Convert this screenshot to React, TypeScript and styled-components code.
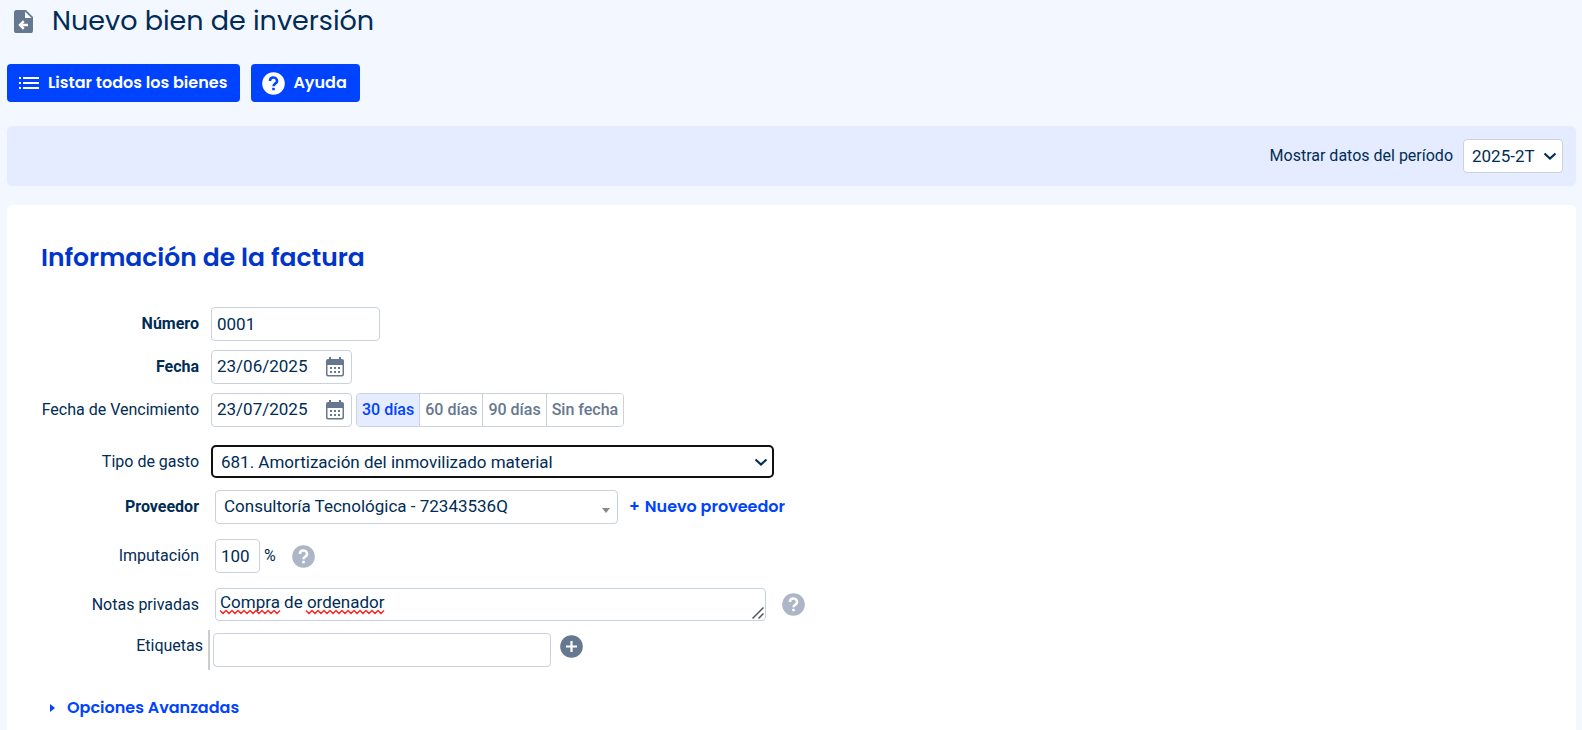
import React from "react";
import styled, { createGlobalStyle } from "styled-components";

const sans = `Roboto, "Liberation Sans", sans-serif`;
const display = `Poppins, Inter, "Liberation Sans", sans-serif`;

const color = {
  page: "#f3f7ff",
  band: "#e5ecff",
  ink: "#002c55",
  blue: "#0043ff",
  heading: "#0035cc",
  border: "#c9d2dd",
  slate: "#66788f",
  muted: "#adb6c6",
};

const GlobalStyle = createGlobalStyle`
  * { box-sizing: border-box; }
  body {
    margin: 0;
    background: ${color.page};
    color: ${color.ink};
    font: 16px/20px ${sans};
  }
  input, select, textarea, button { font: inherit; color: inherit; margin: 0; }
`;

const Page = styled.div`
  min-height: 100vh;
  display: flex;
  flex-direction: column;
  padding: 0 6px 0 7px;
`;

const Header = styled.header`
  display: flex;
  align-items: center;
  gap: 19px;
  height: 42px;
  padding-left: 7px;
`;

const Title = styled.h1`
  margin: 0;
  font: 400 27px/40px ${display};
`;

const Actions = styled.nav`
  display: flex;
  gap: 11px;
  margin-top: 22px;
`;

const ActionButton = styled.button`
  display: flex;
  align-items: center;
  gap: 8px;
  height: 38px;
  padding: 0 13px 0 11px;
  border: 0;
  border-radius: 4px;
  background: ${color.blue};
  color: #fff;
  font: 600 16px/24px ${display};
  cursor: pointer;
`;

const PeriodBar = styled.div`
  display: flex;
  align-items: center;
  justify-content: flex-end;
  gap: 10px;
  height: 60px;
  margin-top: 24px;
  padding-right: 13px;
  border-radius: 5px;
  background: ${color.band};
`;

const Card = styled.main`
  flex: 1;
  margin-top: 19px;
  padding: 35px 34px 8px;
  border-radius: 5px 5px 0 0;
  background: #fff;
`;

const SectionTitle = styled.h2`
  margin: 0 0 31px;
  font: 600 25px/36px ${display};
  color: ${color.heading};
`;

const Row = styled.div<{ $top?: number; $inset?: boolean }>`
  display: flex;
  align-items: center;
  gap: ${(p) => (p.$inset ? 16 : 12)}px;
  margin-top: ${(p) => p.$top ?? 9}px;
`;

const Label = styled.label<{ $bold?: boolean }>`
  width: 158px;
  flex: none;
  text-align: right;
  white-space: nowrap;
  font-weight: ${(p) => (p.$bold ? 700 : 400)};
`;

const Controls = styled.div<{ $gap?: number }>`
  display: flex;
  align-items: center;
  gap: ${(p) => p.$gap ?? 4}px;
`;

const TextInput = styled.input<{ $width: number }>`
  width: ${(p) => p.$width}px;
  height: 34px;
  padding: 0 5px;
  border: 1px solid ${color.border};
  border-radius: 4px;
  background: #fff;
  font-size: 17px;
  outline: 0;
`;

const DateBox = styled.div`
  display: flex;
  align-items: center;
  width: 141px;
  height: 34px;
  padding-right: 7px;
  border: 1px solid ${color.border};
  border-radius: 4px;
`;

const DateInput = styled.input`
  flex: 1;
  min-width: 0;
  height: 32px;
  padding: 0 5px 2px;
  border: 0;
  background: none;
  font-size: 17px;
  outline: 0;
`;

const IconButton = styled.button`
  display: flex;
  padding: 0;
  border: 0;
  background: none;
  color: ${color.slate};
  cursor: pointer;
`;

const Segments = styled.div`
  display: flex;
  height: 34px;
  border: 1px solid ${color.border};
  border-radius: 4px;
  overflow: hidden;
`;

const Segment = styled.button<{ $active?: boolean }>`
  padding: 0 5px;
  border: 0;
  background: ${(p) => (p.$active ? color.band : "#fff")};
  color: ${(p) => (p.$active ? color.blue : color.slate)};
  font-weight: 500;
  cursor: pointer;
  & + & { border-left: 1px solid ${color.border}; }
`;

const SelectWrap = styled.div`
  position: relative;
  display: flex;
  > svg {
    position: absolute;
    right: 6px;
    top: 13px;
    pointer-events: none;
  }
`;

const Select = styled.select<{ $width: number; $focused?: boolean; $raised?: boolean }>`
  appearance: none;
  width: ${(p) => p.$width}px;
  height: ${(p) => (p.$focused ? 33 : 34)}px;
  padding: 0 8px ${(p) => (p.$raised ? 3 : 0)}px;
  border: ${(p) => (p.$focused ? "2px solid #101010" : `1px solid ${color.border}`)};
  border-radius: ${(p) => (p.$focused ? 5 : 4)}px;
  background: #fff;
  font-size: 17px;
  outline: 0;
`;

const BlueLink = styled.a`
  display: inline-flex;
  align-items: center;
  gap: 5px;
  color: ${color.blue};
  font: 600 16px/24px ${display};
  text-decoration: none;
`;

const HelpButton = styled(IconButton)`
  margin-left: 12px;
  color: ${color.muted};
`;

const NotesWrap = styled.div`
  position: relative;
  display: flex;
`;

const Notes = styled.textarea`
  width: 551px;
  height: 33px;
  padding: 3px 4px;
  border: 1px solid ${color.border};
  border-radius: 4px;
  background: #fff;
  font-size: 17px;
  line-height: 20px;
  resize: none;
  overflow: hidden;
  outline: 0;
`;

const SpellSvg = styled.svg`
  position: absolute;
  left: 5px;
  top: 20px;
  pointer-events: none;
`;

const GripSvg = styled.svg`
  position: absolute;
  right: 2px;
  bottom: 2px;
  pointer-events: none;
`;

const TagRow = styled.div`
  display: flex;
  align-items: center;
  gap: 5px;
  margin-top: 9px;
  ${Label} {
    width: 162px;
    margin-bottom: 8px;
  }
`;

const TagBox = styled.div`
  display: flex;
  align-items: center;
  height: 40px;
  padding-left: 3px;
  border-left: 2px solid #ccc;
  gap: 9px;
  ${IconButton} { margin-bottom: 8px; }
`;

const Advanced = styled.div`
  display: flex;
  padding: 26px 0 0 9px;
  ${BlueLink} { gap: 12px; }
`;

const FileIcon = () => (
  <svg width="19" height="23" viewBox="0 0 19 23" aria-hidden="true">
    <path d="M2.6 0H12l7 7v13.400a2.600 2.600 0 0 1-2.600 2.600H2.600A2.600 2.600 0 0 1 0 20.400V2.600A2.600 2.600 0 0 1 2.600 0z" fill={color.slate} />
    <path d="M11 1.500l6.500 6.500H11z" fill="#fff" />
    <path d="M14 15H7M9.800 11.200L6 15l3.800 3.800" fill="none" stroke="#fff" strokeWidth="2.400" />
  </svg>
);

const ListIcon = () => (
  <svg width="22" height="14" viewBox="-1 0 22 14" fill="#fff" aria-hidden="true">
    <path d="M0 1h2v2H0zM0 6h2v2H0zM0 11h2v2H0zM4 1h16v2H4zM4 6h16v2H4zM4 11h16v2H4z" />
  </svg>
);

const HelpIcon = ({ mark }: { mark: string }) => (
  <svg width="23" height="23" viewBox="0 0 23 23" aria-hidden="true">
    <circle cx="11.500" cy="11.500" r="11.300" fill="currentColor" />
    <path d="M8 9a3.500 3.300 0 1 1 5.300 2.600c-1.200.8-1.800 1.300-1.800 2.700" fill="none" stroke={mark} strokeWidth="2.500" />
    <rect x="10.200" y="15.700" width="2.600" height="2.600" rx=".6" fill={mark} />
  </svg>
);

const CalendarIcon = () => (
  <svg width="18" height="20" viewBox="0 0 18 20" fill="currentColor" aria-hidden="true">
    <path fillRule="evenodd" d="M3 0h2v2h8V0h2v2h1a2 2 0 0 1 2 2v13.500a2 2 0 0 1-2 2H2a2 2 0 0 1-2-2V4a2 2 0 0 1 2-2h1zM1.500 8V17a1 1 0 0 0 1 1h13a1 1 0 0 0 1-1V8z" />
    <path d="M4 10h2v2H4zM8 10h2v2H8zM12 10h2v2h-2zM4 14h2v2H4zM8 14h2v2H8zM12 14h2v2h-2z" />
  </svg>
);

const PlusIcon = () => (
  <svg width="23" height="23" viewBox="0 0 23 23" aria-hidden="true">
    <circle cx="11.500" cy="11.500" r="11.300" fill="currentColor" />
    <path d="M11.500 6v11M6 11.500h11" stroke="#fff" strokeWidth="2.200" />
  </svg>
);

const Chevron = () => (
  <svg width="14" height="9" viewBox="0 0 14 9" aria-hidden="true">
    <path d="M1.500 1.500L7 6.500l5.500-5" fill="none" stroke={color.ink} strokeWidth="2.100" />
  </svg>
);

const Caret = () => (
  <svg width="12" height="14" viewBox="0 0 12 14" aria-hidden="true">
    <path d="M2 5h8l-4 5z" fill="#888" />
  </svg>
);

const wave = (from: number, to: number) => {
  let d = `M${from} 2.500`;
  for (let x = from; x < to; x += 6) d += "l3 3l3 -3";
  return d;
};

const SpellMarks = () => (
  <SpellSvg width="170" height="8" viewBox="0 0 170 8" aria-hidden="true">
    <path d={wave(0, 58) + wave(86, 160)} fill="none" stroke="#f22" strokeWidth="1.400" />
  </SpellSvg>
);

const Grip = () => (
  <GripSvg width="12" height="12" viewBox="0 0 12 12" aria-hidden="true">
    <path d="M.5 11.500l11-11M6.500 11.500l5-5" stroke="#555" strokeWidth="1.500" />
  </GripSvg>
);

const terms = ["30 días", "60 días", "90 días", "Sin fecha"];

export default function App() {
  return (
    <Page>
      <GlobalStyle />
      <Header>
        <FileIcon />
        <Title>Nuevo bien de inversión</Title>
      </Header>
      <Actions>
        <ActionButton type="button"><ListIcon />Listar todos los bienes</ActionButton>
        <ActionButton type="button"><HelpIcon mark={color.blue} />Ayuda</ActionButton>
      </Actions>
      <PeriodBar>
        <label htmlFor="periodo">Mostrar datos del período</label>
        <SelectWrap>
          <Select id="periodo" $width={100}><option>2025-2T</option></Select>
          <Chevron />
        </SelectWrap>
      </PeriodBar>
      <Card>
        <SectionTitle>Información de la factura</SectionTitle>
        <Row $top={0}>
          <Label htmlFor="numero" $bold>Número</Label>
          <TextInput id="numero" $width={169} defaultValue="0001" />
        </Row>
        <Row>
          <Label htmlFor="fecha" $bold>Fecha</Label>
          <DateBox>
            <DateInput id="fecha" defaultValue="23/06/2025" />
            <IconButton type="button" aria-label="Elegir fecha"><CalendarIcon /></IconButton>
          </DateBox>
        </Row>
        <Row>
          <Label htmlFor="vencimiento">Fecha de Vencimiento</Label>
          <Controls>
            <DateBox>
              <DateInput id="vencimiento" defaultValue="23/07/2025" />
              <IconButton type="button" aria-label="Elegir fecha de vencimiento"><CalendarIcon /></IconButton>
            </DateBox>
            <Segments>
              {terms.map((t, i) => (
                <Segment key={t} type="button" $active={i === 0}>{t}</Segment>
              ))}
            </Segments>
          </Controls>
        </Row>
        <Row $top={18}>
          <Label htmlFor="tipo">Tipo de gasto</Label>
          <SelectWrap>
            <Select id="tipo" $width={563} $focused>
              <option>681. Amortización del inmovilizado material</option>
            </Select>
            <Chevron />
          </SelectWrap>
        </Row>
        <Row $top={12} $inset>
          <Label htmlFor="proveedor" $bold>Proveedor</Label>
          <Controls $gap={11}>
            <SelectWrap>
              <Select id="proveedor" $width={403} $raised>
                <option>Consultoría Tecnológica - 72343536Q</option>
              </Select>
              <Caret />
            </SelectWrap>
            <BlueLink href="#nuevo-proveedor"><span>+</span>Nuevo proveedor</BlueLink>
          </Controls>
        </Row>
        <Row $top={15} $inset>
          <Label htmlFor="imputacion">Imputación</Label>
          <Controls>
            <TextInput id="imputacion" $width={45} defaultValue="100" />
            <span>%</span>
            <HelpButton type="button" aria-label="Ayuda sobre imputación"><HelpIcon mark="#fff" /></HelpButton>
          </Controls>
        </Row>
        <Row $top={15} $inset>
          <Label htmlFor="notas">Notas privadas</Label>
          <Controls>
            <NotesWrap>
              <Notes id="notas" rows={1} spellCheck={false} defaultValue="Compra de ordenador" />
              <SpellMarks />
              <Grip />
            </NotesWrap>
            <HelpButton type="button" aria-label="Ayuda sobre notas"><HelpIcon mark="#fff" /></HelpButton>
          </Controls>
        </Row>
        <TagRow>
          <Label htmlFor="etiquetas">Etiquetas</Label>
          <TagBox>
            <TextInput id="etiquetas" $width={338} />
            <IconButton type="button" aria-label="Añadir etiqueta"><PlusIcon /></IconButton>
          </TagBox>
        </TagRow>
        <Advanced>
          <BlueLink href="#opciones">
            <svg width="5" height="8" viewBox="0 0 5 8" aria-hidden="true"><path d="M0 0l5 4-5 4z" fill="currentColor" /></svg>
            Opciones Avanzadas
          </BlueLink>
        </Advanced>
      </Card>
    </Page>
  );
}
